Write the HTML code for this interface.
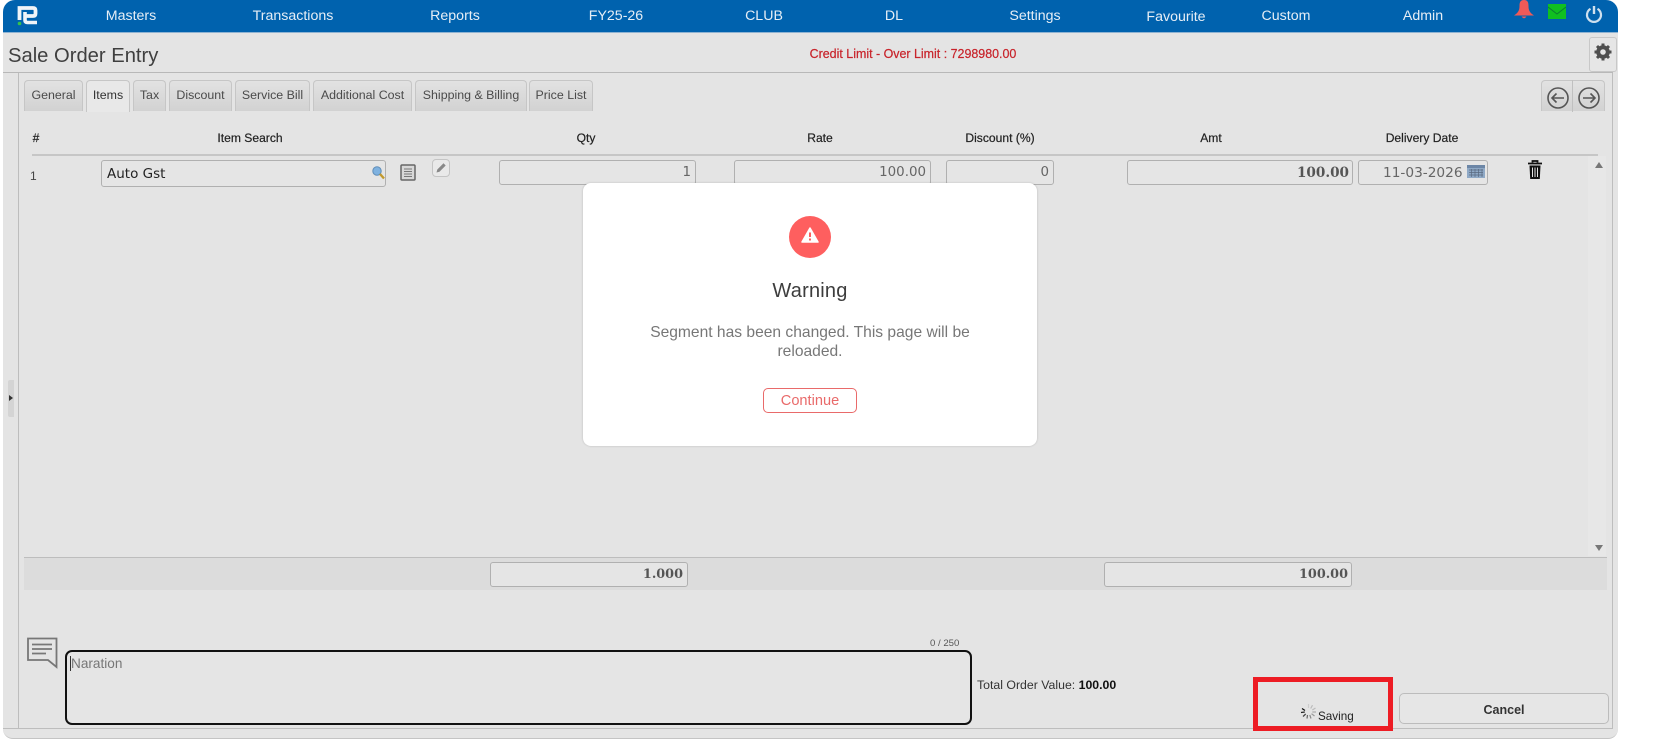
<!DOCTYPE html>
<html><head><meta charset="utf-8"><title>Sale Order Entry</title>
<style>
html,body{margin:0;padding:0;background:#fff}
body{width:1659px;height:741px;overflow:hidden;position:relative;font-family:"Liberation Sans",sans-serif}
.a{position:absolute}
.n{position:absolute;top:8px;width:120px;margin-left:-60px;text-align:center;color:#e6eef6;font-size:14.2px;line-height:17px}
.t{position:absolute;top:80px;height:31px;box-sizing:border-box;border:1px solid #c6c6c6;border-bottom:0;border-radius:4px 4px 0 0;background:linear-gradient(#e2e2e2,#d2d2d2);text-align:center;font-size:12.4px;line-height:29px;color:#4a4a4a}
.h{position:absolute;top:131px;width:140px;margin-left:-70px;text-align:center;font-size:12.1px;line-height:15px;color:#222;-webkit-text-stroke:.2px #222}
.i{position:absolute;box-sizing:border-box;border:1px solid #b0b0b0;border-radius:3px;background:#e5e5e5;text-align:right;padding-right:4px;font-family:"DejaVu Sans",sans-serif;color:#666}
.b{font-family:"DejaVu Serif",serif;font-weight:bold;color:#555;font-size:13.6px}
</style></head><body>

<!-- page shell -->
<div class="a" style="left:3px;top:0;width:1615px;height:738px;background:#e4e4e4;border-radius:12px 12px 10px 10px;border-bottom:1px solid #c4c4c4"></div>
<div class="a" style="left:3px;top:0;width:1615px;height:32px;background:#0062ae;border-radius:12px 12px 0 0;border-bottom:1px solid #8fb3d2"></div>
<div class="a" style="left:18px;top:72px;width:1px;height:656px;background:#bdbdbd"></div>
<div class="a" style="left:1612px;top:72px;width:1px;height:656px;background:#bdbdbd"></div>
<div class="a" style="left:3px;top:72px;width:1610px;height:1px;background:#b8b8b8"></div>
<div class="a" style="left:3px;top:728px;width:1610px;height:1px;background:#bdbdbd"></div>

<!-- logo -->
<svg class="a" style="left:17px;top:5px" width="21" height="21" viewBox="0 0 21 21">
<path d="M2.500 15V3H16Q18.500 3 18.500 5.500V8.500Q18.500 11 16 11H9" fill="none" stroke="#f0f4f8" stroke-width="3.800"/>
<path d="M8 7V15Q8 17.500 10.500 17.500H20" fill="none" stroke="#f0f4f8" stroke-width="3.600"/>
<circle cx="2.500" cy="18.500" r="1.800" fill="#35c24a"/>
</svg>

<!-- nav -->
<div class="n" style="left:131px">Masters</div>
<div class="n" style="left:293px">Transactions</div>
<div class="n" style="left:455px">Reports</div>
<div class="n" style="left:616px">FY25-26</div>
<div class="n" style="left:764px">CLUB</div>
<div class="n" style="left:894px">DL</div>
<div class="n" style="left:1035px">Settings</div>
<div class="n" style="left:1176px;top:9px">Favourite</div>
<div class="n" style="left:1286px">Custom</div>
<div class="n" style="left:1423px">Admin</div>

<svg class="a" style="left:1513px;top:0" width="22" height="20" viewBox="0 0 22 20"><path d="M11 0C7 0 6.500 3 6.500 6C6.500 10 5.500 12.500 1 15.500H21C16.500 12.500 15.500 10 15.500 6C15.500 3 15 0 11 0ZM8.500 16.500Q11 20 13.500 16.500Z" fill="#ef5a58"/></svg>
<svg class="a" style="left:1548px;top:4px" width="18" height="15" viewBox="0 0 18 15"><rect width="18" height="15" fill="#10c020"/><path d="M0 3L9 10L18 3" fill="none" stroke="#0a7f30" stroke-width="1"/></svg>
<svg class="a" style="left:1585px;top:5px" width="18" height="18" viewBox="0 0 18 18"><path d="M5.500 3.800A7 7 0 1 0 12.500 3.800" fill="none" stroke="#cfe0ee" stroke-width="2.200"/><path d="M9 1V9" stroke="#cfe0ee" stroke-width="2.400"/></svg>

<!-- title -->
<div class="a" style="left:8px;top:43px;font-size:20.2px;line-height:26px;color:#3f3f3f;white-space:nowrap">Sale Order Entry</div>
<div class="a" style="left:760px;top:47px;width:306px;text-align:center;font-size:12.45px;line-height:15px;color:#c8232a;-webkit-text-stroke:.2px #c8232a;white-space:nowrap">Credit Limit - Over Limit : 7298980.00</div>
<div class="a" style="left:1589px;top:37px;width:28px;height:35px;box-sizing:border-box;border:1px solid #c8c8c8;border-radius:3px;background:#e6e6e6"></div>
<svg class="a" style="left:1594px;top:43px" width="18" height="18" viewBox="0 0 18 18"><circle cx="9" cy="9" r="5" fill="none" stroke="#4f4f4f" stroke-width="3.600"/><path d="M9 0.500V17.500M0.500 9H17.500M3 3L15 15M15 3L3 15" stroke="#4f4f4f" stroke-width="3"/><circle cx="9" cy="9" r="2.800" fill="#e6e6e6"/></svg>

<!-- tabs -->
<div class="t" style="left:24px;width:59px">General</div>
<div class="t" style="left:86px;width:44px;height:32px;background:#e8e8e8;color:#333;z-index:2">Items</div>
<div class="t" style="left:133px;width:33px">Tax</div>
<div class="t" style="left:169px;width:63px">Discount</div>
<div class="t" style="left:235px;width:75px">Service Bill</div>
<div class="t" style="left:313px;width:99px">Additional Cost</div>
<div class="t" style="left:415px;width:112px">Shipping &amp; Billing</div>
<div class="t" style="left:529px;width:64px">Price List</div>
<div class="t" style="left:1541px;width:64px"></div>
<div class="a" style="left:1572px;top:80px;width:1px;height:32px;background:#c0c0c0"></div>
<svg class="a" style="left:1546px;top:86px" width="56" height="24" viewBox="0 0 56 24" fill="none" stroke="#555" stroke-width="1.600"><circle cx="12" cy="12" r="10"/><path d="M18 12H6M10.500 7.500L6 12L10.500 16.500"/><circle cx="43" cy="12" r="10"/><path d="M37 12H49M44.500 7.500L49 12L44.500 16.500"/></svg>

<!-- table header -->
<div class="h" style="left:36px">#</div>
<div class="h" style="left:250px">Item Search</div>
<div class="h" style="left:586px">Qty</div>
<div class="h" style="left:820px">Rate</div>
<div class="h" style="left:1000px">Discount (%)</div>
<div class="h" style="left:1211px">Amt</div>
<div class="h" style="left:1422px">Delivery Date</div>
<div class="a" style="left:32px;top:154px;width:1566px;height:2px;background:#c6c6c6"></div>

<!-- row -->
<div class="a" style="left:30px;top:168px;font-size:12px;line-height:16px;color:#444">1</div>
<div class="i" style="left:101px;top:160px;width:285px;height:27px;text-align:left;padding-left:5px;font-size:13.500px;line-height:27px;color:#222">Auto Gst</div>
<svg class="a" style="left:371px;top:165px" width="14" height="15" viewBox="0 0 14 15"><circle cx="6" cy="6" r="4.200" fill="#7fb2e0" stroke="#5f8db8"/><path d="M9 9L13 13.500" stroke="#c29a2e" stroke-width="2.400"/></svg>
<svg class="a" style="left:400px;top:164px" width="16" height="17" viewBox="0 0 16 17"><rect x="1" y="1" width="14" height="15" rx="1" fill="#d8d8d8" stroke="#666" stroke-width="1.500"/><path d="M4 5H12M4 7.500H12M4 10H12M4 12.500H12" stroke="#777"/></svg>
<div class="a" style="left:432px;top:159px;width:18px;height:18px;box-sizing:border-box;border:1px solid #c4c4c4;border-radius:4px;background:#e9e9e9"></div>
<svg class="a" style="left:434px;top:161px" width="14" height="14" viewBox="0 0 14 14"><path d="M2.500 11.500L3.300 8.500L9.500 2.300L11.700 4.500L5.500 10.700Z" fill="#888"/></svg>

<div class="i" style="left:499px;top:160px;width:197px;height:25px;font-size:13.400px;line-height:24px">1</div>
<div class="i" style="left:734px;top:160px;width:197px;height:25px;font-size:13.400px;line-height:24px">100.00</div>
<div class="i" style="left:946px;top:160px;width:108px;height:25px;font-size:13.400px;line-height:24px">0</div>
<div class="i b" style="left:1127px;top:160px;width:226px;height:25px;line-height:24px;padding-right:3px;font-family:'DejaVu Serif',serif">100.00</div>
<div class="i" style="left:1358px;top:160px;width:130px;height:25px;text-align:left;padding-left:24px;font-size:13.700px;line-height:24px;white-space:nowrap">11-03-2026</div>
<svg class="a" style="left:1467px;top:165px" width="18" height="13" viewBox="0 0 18 13"><rect width="18" height="13" fill="#8fa9c6"/><rect y="0" width="18" height="3" fill="#6c86a6"/><path d="M2 5H16M2 7.500H16M2 10H16M4.500 4V12M8 4V12M11.500 4V12M15 4V12" stroke="#5a6a80" stroke-width=".7"/></svg>
<svg class="a" style="left:1527px;top:160px" width="16" height="20" viewBox="0 0 16 20"><path d="M5.500 2.500V1H10.500V2.500M1 3.500H15" stroke="#111" stroke-width="1.800" fill="none"/><path d="M2.500 5.500H13.500L12.800 19H3.200Z" fill="#111"/><path d="M5.500 7.500V17M8 7.500V17M10.500 7.500V17" stroke="#e4e4e4" stroke-width="1"/></svg>

<!-- scrollbar -->
<div class="a" style="left:1588px;top:156px;width:18px;height:400px;background:#e7e7e7"></div>
<div class="a" style="left:1595px;top:162px;border:4px solid transparent;border-top:0;border-bottom:6px solid #777"></div>
<div class="a" style="left:1595px;top:545px;border:4px solid transparent;border-bottom:0;border-top:6px solid #777"></div>

<!-- totals -->
<div class="a" style="left:24px;top:557px;width:1583px;height:1px;background:#bdbdbd"></div>
<div class="a" style="left:24px;top:558px;width:1583px;height:32px;background:#dcdcdc"></div>
<div class="i b" style="left:490px;top:562px;width:198px;height:25px;line-height:24px;font-size:12.8px;font-family:'DejaVu Serif',serif">1.000</div>
<div class="i b" style="left:1104px;top:562px;width:248px;height:25px;line-height:24px;font-size:12.8px;padding-right:3px;font-family:'DejaVu Serif',serif">100.00</div>

<!-- narration -->
<svg class="a" style="left:27px;top:637px" width="31" height="32" viewBox="0 0 31 32" fill="none" stroke="#777" stroke-width="1.800"><path d="M1 1.500H29.500V30L21 23H1Z"/><path d="M5 7.500H25M5 12H25M5 16.500H19"/></svg>
<div class="a" style="left:65px;top:650px;width:907px;height:75px;box-sizing:border-box;border:2px solid #111;border-radius:7px;background:#e5e5e5"></div>
<div class="a" style="left:70px;top:656px;width:1px;height:15px;background:#333"></div>
<div class="a" style="left:71px;top:655px;font-size:13.600px;line-height:18px;color:#777">Naration</div>
<div class="a" style="left:930px;top:638px;font-size:9.600px;line-height:11px;color:#555;white-space:nowrap">0 / 250</div>
<div class="a" style="left:977px;top:677.500px;font-size:12.300px;line-height:15px;color:#333;white-space:nowrap">Total Order Value: <span style="font-weight:bold;color:#111">100.00</span></div>

<!-- buttons -->
<div class="a" style="left:1253px;top:677px;width:140px;height:54px;box-sizing:border-box;border:5px solid #ed1c24"></div>
<svg class="a" style="left:1300px;top:703px" width="17" height="17" viewBox="0 0 17 17" stroke-width="1.200" fill="none"><path d="M8.500 1V5" stroke="#ccc"/><path d="M12.500 2.200L10.700 5.500" stroke="#bbb"/><path d="M15.500 5L12.300 7" stroke="#bbb"/><path d="M16 9H12.300" stroke="#aaa"/><path d="M14.500 13L11.500 10.700" stroke="#999"/><path d="M11 15.500L9.800 12" stroke="#888"/><path d="M7 15.500L7.500 12" stroke="#666"/><path d="M3 13.500L5.700 11" stroke="#444"/><path d="M1 9.500L4.800 9" stroke="#222"/><path d="M2 5.500L5 7.500" stroke="#111"/></svg>
<div class="a" style="left:1318px;top:708.500px;font-size:11.700px;line-height:15px;color:#222">Saving</div>
<div class="a" style="left:1399px;top:693px;width:210px;height:31px;box-sizing:border-box;border:1px solid #bcbcbc;border-radius:5px;background:#e6e6e6;text-align:center;font-size:12.500px;font-weight:bold;line-height:32px;color:#333">Cancel</div>

<!-- side handle -->
<div class="a" style="left:8px;top:380px;width:6px;height:37px;background:#d4d4d4;border-radius:2px 0 0 2px"></div>
<div class="a" style="left:9px;top:395px;border:3px solid transparent;border-left:4px solid #333;border-right:0"></div>

<!-- modal -->
<div class="a" style="left:583px;top:183px;width:454px;height:263px;background:#fff;border-radius:8px;box-shadow:0 0 2px rgba(0,0,0,.18)"></div>
<div class="a" style="left:789px;top:216px;width:42px;height:42px;border-radius:50%;background:#fe5f5f"></div>
<svg class="a" style="left:801px;top:226px" width="18" height="18" viewBox="0 0 18 18"><path d="M9 2L17 16H1Z" fill="#fff" stroke="#fff" stroke-width="1.500" stroke-linejoin="round"/><path d="M9 6.500V11M9 12.500V14.500" stroke="#fe5f5f" stroke-width="2"/></svg>
<div class="a" style="left:583px;top:278px;width:454px;text-align:center;font-size:20px;line-height:26px;color:#3d3d3d;letter-spacing:.2px">Warning</div>
<div class="a" style="left:623px;top:323px;width:374px;text-align:center;font-size:15.600px;line-height:19px;color:#777">Segment has been changed. This page will be<br>reloaded.</div>
<div class="a" style="left:763px;top:388px;width:94px;height:25px;box-sizing:border-box;border:1px solid #e96a6a;border-radius:5px;text-align:center;font-size:14.600px;line-height:25px;color:#e96a6a;background:#fff">Continue</div>

</body></html>
